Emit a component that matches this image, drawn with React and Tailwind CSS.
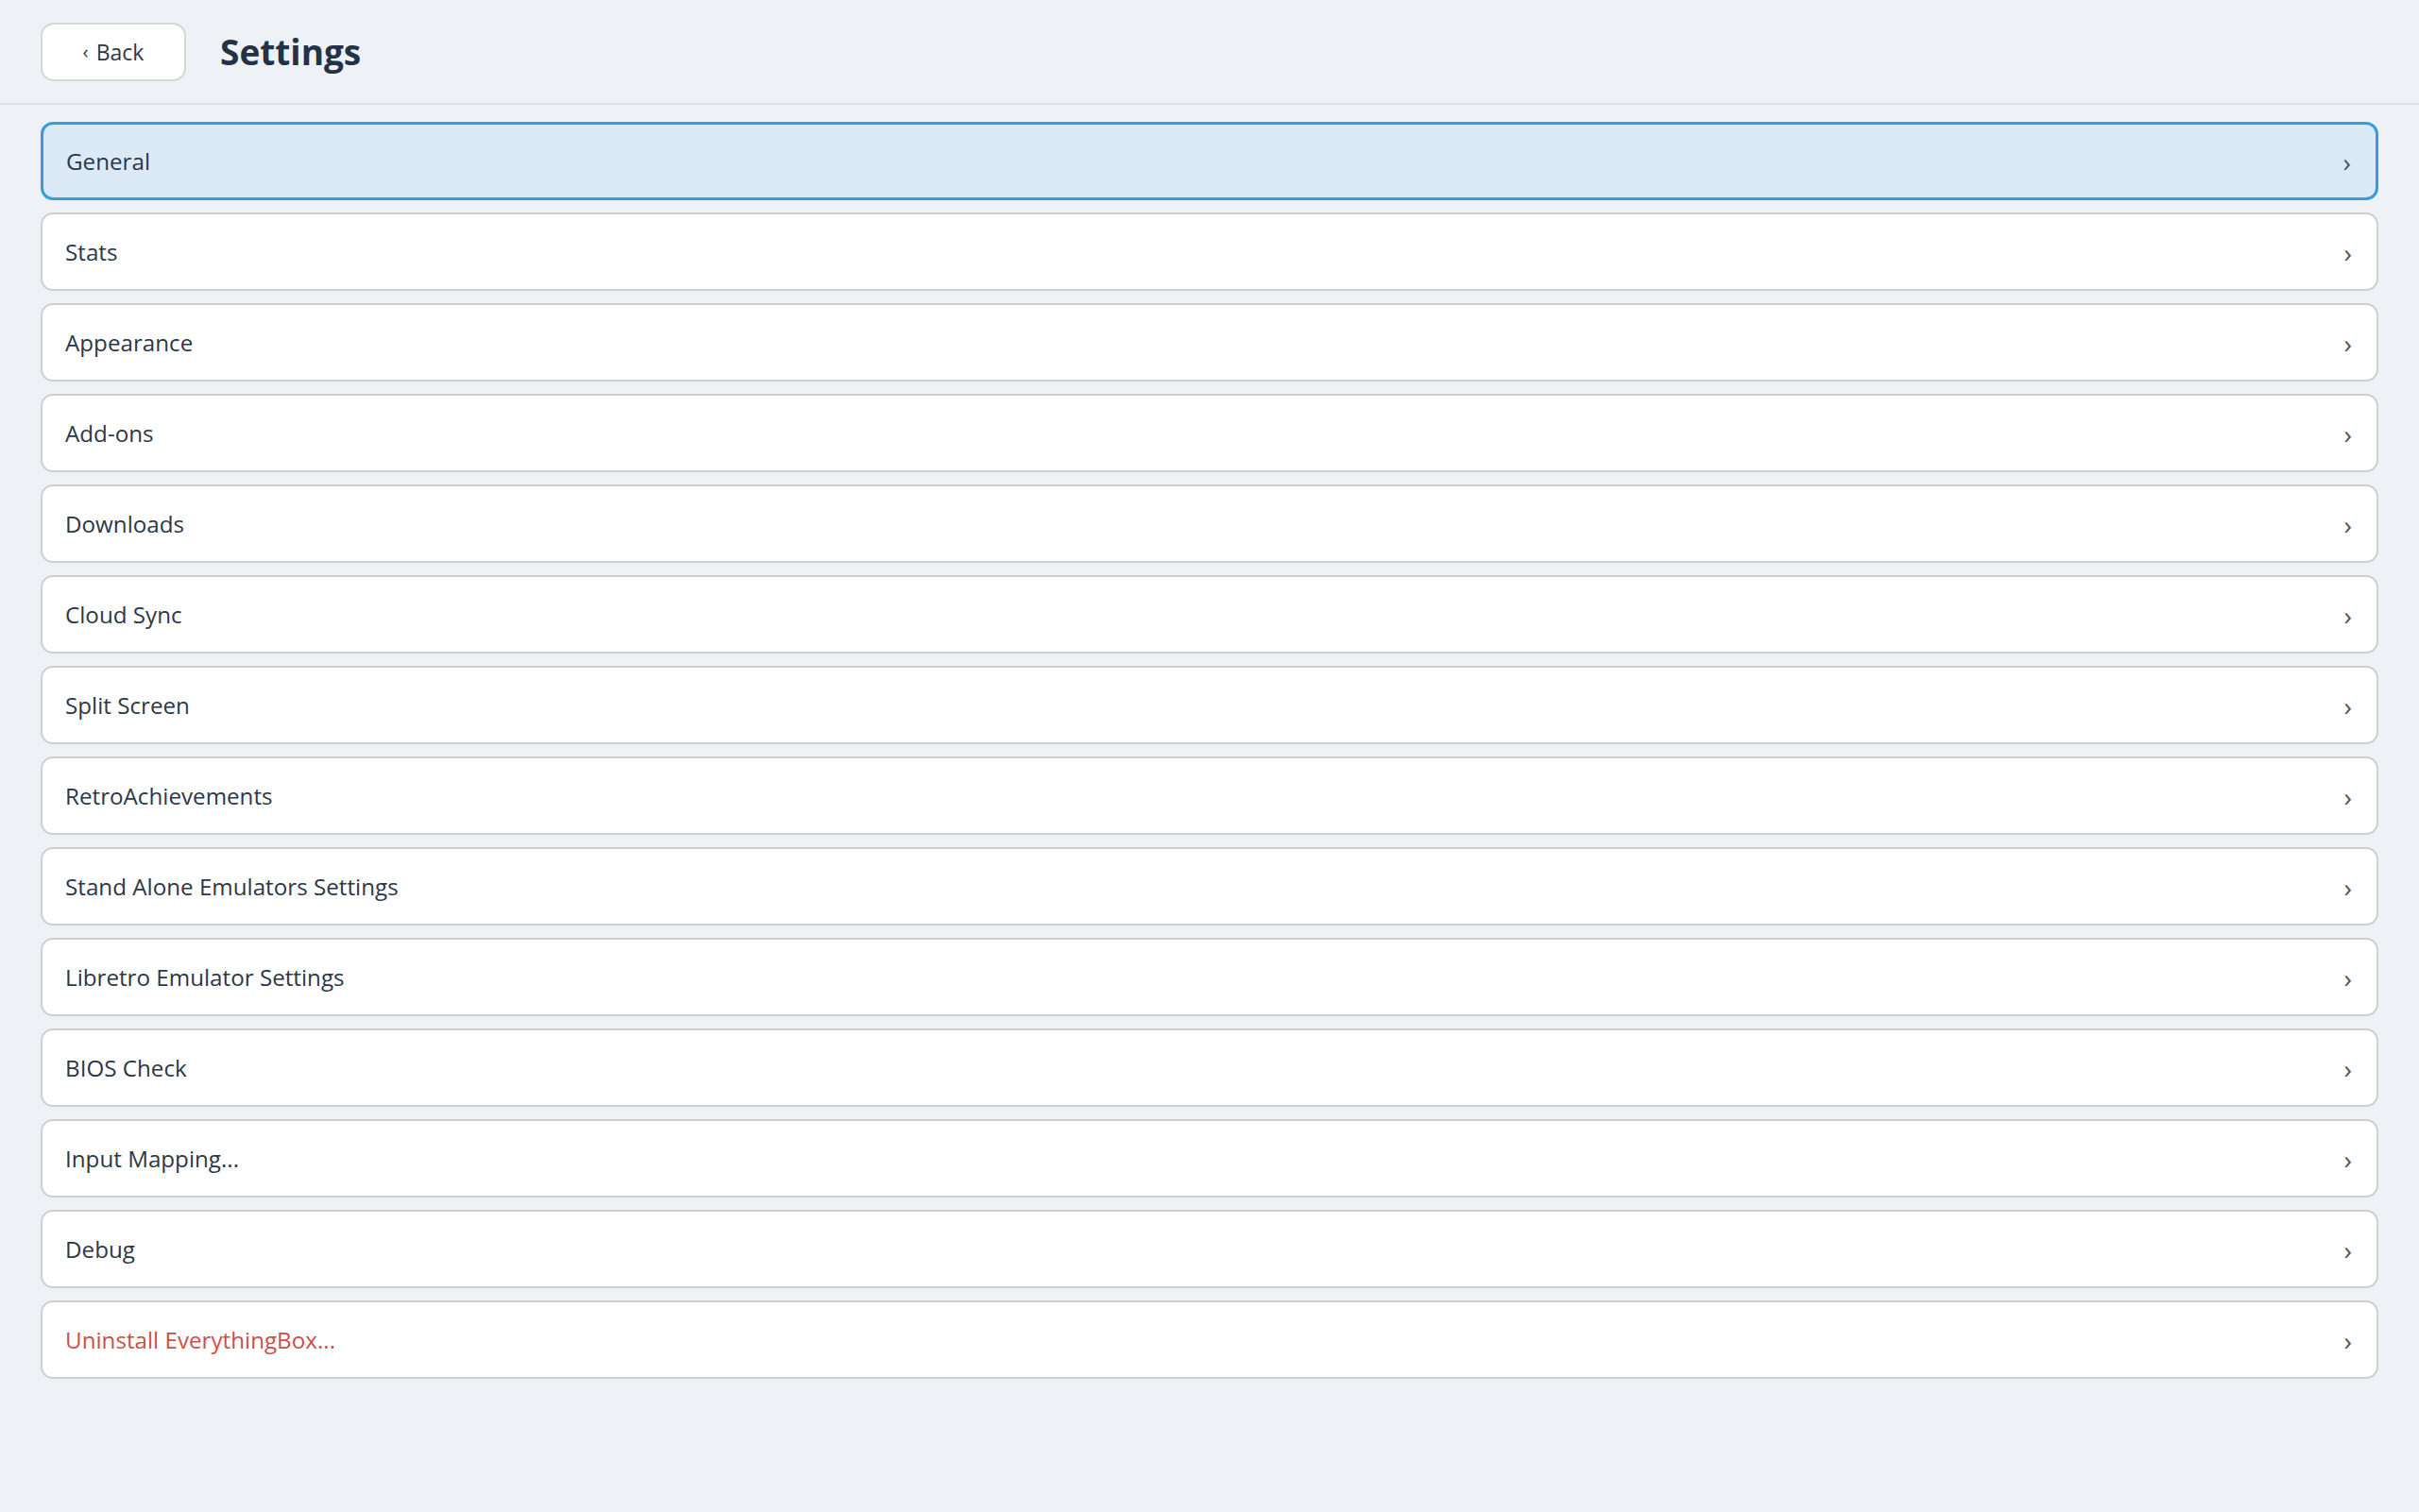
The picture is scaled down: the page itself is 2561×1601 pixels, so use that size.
import React, { useState } from "react";

const sections = [
  "General",
  "Stats",
  "Appearance",
  "Add-ons",
  "Downloads",
  "Cloud Sync",
  "Split Screen",
  "RetroAchievements",
  "Stand Alone Emulators Settings",
  "Libretro Emulator Settings",
  "BIOS Check",
  "Input Mapping...",
  "Debug",
];

const font = { fontFamily: '"Open Sans", "Noto Sans", sans-serif' };

const Row = ({ label, active, danger, onClick }) => (
  <button
    onClick={onClick}
    className={`flex items-center justify-between h-[83px] w-full rounded-[13px] pl-[24px] pr-[26px] text-left text-[24.2px] ${
      active
        ? "bg-[#dce9f7] border-[3px] border-[#3a9bdc]"
        : "bg-white border-2 border-[#cdcfd2]"
    }`}
  >
    <span className={`pt-[2px] ${danger ? "text-[#c9514a]" : "text-[#2d3748]"}`}>{label}</span>
    <span className="text-[#4a5568] text-[28px] leading-none pt-[1px]">›</span>
  </button>
);

const App = () => {
  const [selected, setSelected] = useState("General");

  return (
    <div className="min-h-screen bg-[#eef2f7]" style={font}>
      {/* Header */}
      <div className="flex items-center h-[111px] px-[43px] pt-[1px] border-b-2 border-[#dde2e8]">
        <button className="flex items-center justify-center w-[154px] h-[62px] rounded-[14px] bg-white border-2 border-[#d6d6d6] text-[23px] text-[#2d3748]">
          <span className="mr-[8px] text-[20px]">‹</span>Back
        </button>
        <h1 className="ml-[36px] text-[37px] font-bold text-[#253246]">Settings</h1>
      </div>

      {/* Section list */}
      <div className="flex flex-col gap-[13px] px-[43px] pt-[18px]">
        {sections.map((s) => (
          <Row
            key={s}
            label={s}
            active={selected === s}
            onClick={() => setSelected(s)}
          />
        ))}
        <Row label="Uninstall EverythingBox..." danger />
      </div>
    </div>
  );
};

export default App;
